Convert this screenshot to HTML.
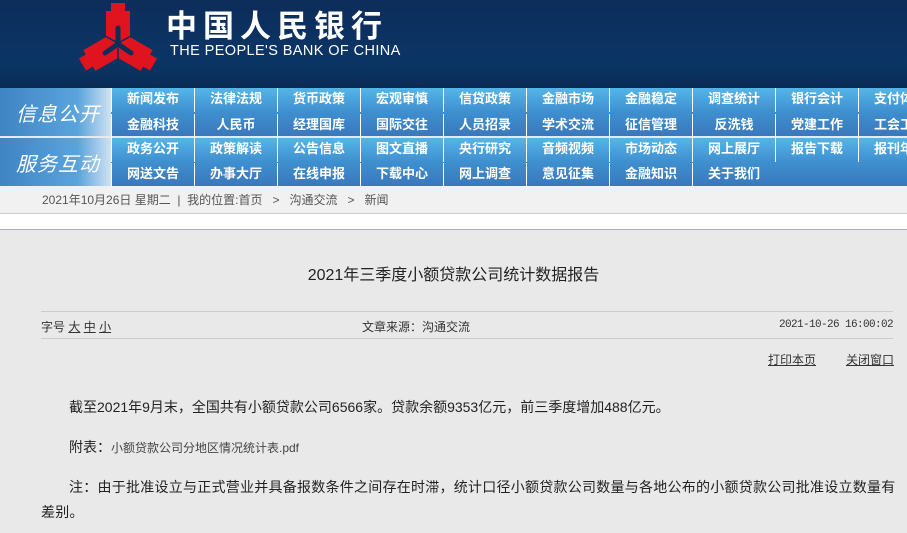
<!DOCTYPE html>
<html><head><meta charset="utf-8"><style>
*{margin:0;padding:0;box-sizing:border-box}
body{width:907px;height:533px;overflow:hidden;background:#e9e9e9;font-family:"Liberation Sans","Noto Sans CJK SC",sans-serif;position:relative}
.hdr{position:absolute;left:0;top:0;width:907px;height:88px;background:linear-gradient(#0d2d5a,#0b3566 70%,#0a2c55);}
.cn{position:absolute;left:166px;top:4px;color:#fff;font-size:31px;letter-spacing:6px;font-weight:bold;font-family:"Noto Sans CJK SC",sans-serif;line-height:40px}
.en{position:absolute;left:170px;top:43px;color:#fff;font-size:14.5px;letter-spacing:0.4px;line-height:16px}
.nav{position:absolute;left:0;width:907px;height:48px;background:linear-gradient(#55b5e8,#3f8fcf 50%,#3a78bd);}
.lab{position:absolute;left:0;top:0;width:111px;height:48px;background:linear-gradient(90deg,#3f84c4,#5aa4dc 70%,#cfe2f2);color:#fff;font-size:20px;font-style:italic;padding:10px 0 0 16px;letter-spacing:1px}
.it{position:absolute;width:83px;height:24px;color:#fff;font-size:13px;font-weight:bold;text-align:center;line-height:22px;border-left:1px solid #fff}
.bc{position:absolute;left:0;top:186px;width:907px;height:28px;background:#f1f1f1;border-bottom:1px solid #ccc;color:#555;font-size:12px;padding-left:42px;line-height:28px}
.wb{position:absolute;left:0;top:214px;width:907px;height:16px;background:#fff;border-bottom:1px solid #a9aeb8}
.t{position:absolute;left:0;width:907px;text-align:center;top:261px;font-size:16px;color:#222}
.ln{position:absolute;left:41px;width:852px;height:1px;background:#ccc}
.s{position:absolute;font-size:12px;color:#333;white-space:nowrap}
p{position:absolute;left:41px;width:860px;font-size:14px;color:#222;line-height:25px;text-indent:28px}
</style></head><body>
<div class="hdr">
<svg width="907" height="88" style="position:absolute;left:0;top:0">
<g fill="#e0141e">
<g><rect x="111" y="3" width="14" height="9"/><rect x="106" y="11" width="24" height="31"/></g>
<g transform="rotate(120 118 44)"><rect x="111" y="3" width="14" height="9"/><rect x="106" y="11" width="24" height="31"/></g>
<g transform="rotate(240 118 44)"><rect x="111" y="3" width="14" height="9"/><rect x="106" y="11" width="24" height="31"/></g>
</g>
<g stroke="#0d2d5a" stroke-width="5" fill="none" stroke-linecap="round"><path d="M118 28 L118 44 L105 53 M118 44 L131 53"/></g>
<g stroke="#0d2d5a" stroke-width="1.5"><path d="M118 48 L118 66 M116 42 L94 30 M120 42 L142 30"/></g>
</svg>
<div class="cn">中国人民银行</div>
<div class="en">THE PEOPLE'S BANK OF CHINA</div>
</div>
<div class="nav" style="top:88px"><div class="lab">信息公开</div>
<div class="it" style="left:111px;top:0">新闻发布</div><div class="it" style="left:194px;top:0">法律法规</div><div class="it" style="left:277px;top:0">货币政策</div><div class="it" style="left:360px;top:0">宏观审慎</div><div class="it" style="left:443px;top:0">信贷政策</div><div class="it" style="left:526px;top:0">金融市场</div><div class="it" style="left:609px;top:0">金融稳定</div><div class="it" style="left:692px;top:0">调查统计</div><div class="it" style="left:775px;top:0">银行会计</div><div class="it" style="left:858px;top:0">支付体系</div>
<div class="it" style="left:111px;top:26px">金融科技</div><div class="it" style="left:194px;top:26px">人民币</div><div class="it" style="left:277px;top:26px">经理国库</div><div class="it" style="left:360px;top:26px">国际交往</div><div class="it" style="left:443px;top:26px">人员招录</div><div class="it" style="left:526px;top:26px">学术交流</div><div class="it" style="left:609px;top:26px">征信管理</div><div class="it" style="left:692px;top:26px">反洗钱</div><div class="it" style="left:775px;top:26px">党建工作</div><div class="it" style="left:858px;top:26px">工会工作</div>
</div>
<div class="nav" style="top:138px;height:48px"><div class="lab">服务互动</div>
<div class="it" style="left:111px;top:0">政务公开</div><div class="it" style="left:194px;top:0">政策解读</div><div class="it" style="left:277px;top:0">公告信息</div><div class="it" style="left:360px;top:0">图文直播</div><div class="it" style="left:443px;top:0">央行研究</div><div class="it" style="left:526px;top:0">音频视频</div><div class="it" style="left:609px;top:0">市场动态</div><div class="it" style="left:692px;top:0">网上展厅</div><div class="it" style="left:775px;top:0">报告下载</div><div class="it" style="left:858px;top:0">报刊年鉴</div>
<div class="it" style="left:111px;top:25px">网送文告</div><div class="it" style="left:194px;top:25px">办事大厅</div><div class="it" style="left:277px;top:25px">在线申报</div><div class="it" style="left:360px;top:25px">下载中心</div><div class="it" style="left:443px;top:25px">网上调查</div><div class="it" style="left:526px;top:25px">意见征集</div><div class="it" style="left:609px;top:25px">金融知识</div><div class="it" style="left:692px;top:25px">关于我们</div>
</div>
<div class="bc">2021年10月26日 星期二 &nbsp;|&nbsp; 我的位置:首页 &nbsp;&nbsp;&gt;&nbsp;&nbsp; 沟通交流 &nbsp;&nbsp;&gt;&nbsp;&nbsp; 新闻</div>
<div class="wb"></div>
<div class="t">2021年三季度小额贷款公司统计数据报告</div>
<div class="ln" style="top:311px"></div>
<div class="s" style="left:41px;top:318px">字号 <u>大</u> <u>中</u> <u>小</u></div>
<div class="s" style="left:362px;top:318px">文章来源：沟通交流</div>
<div class="s" style="left:779px;top:319px;font-family:'Liberation Mono',monospace;font-size:11px;letter-spacing:-0.6px">2021-10-26 16:00:02</div>
<div class="ln" style="top:338px"></div>
<div class="s" style="left:768px;top:351px"><u>打印本页</u></div>
<div class="s" style="left:846px;top:351px"><u>关闭窗口</u></div>
<p style="top:395px">截至2021年9月末，全国共有小额贷款公司6566家。贷款余额9353亿元，前三季度增加488亿元。</p>
<p style="top:435px">附表：<span style="font-size:12px;color:#444">小额贷款公司分地区情况统计表.pdf</span></p>
<p style="top:475px;letter-spacing:0.25px">注：由于批准设立与正式营业并具备报数条件之间存在时滞，统计口径小额贷款公司数量与各地公布的小额贷款公司批准设立数量有<br>差别。</p>
</body></html>
